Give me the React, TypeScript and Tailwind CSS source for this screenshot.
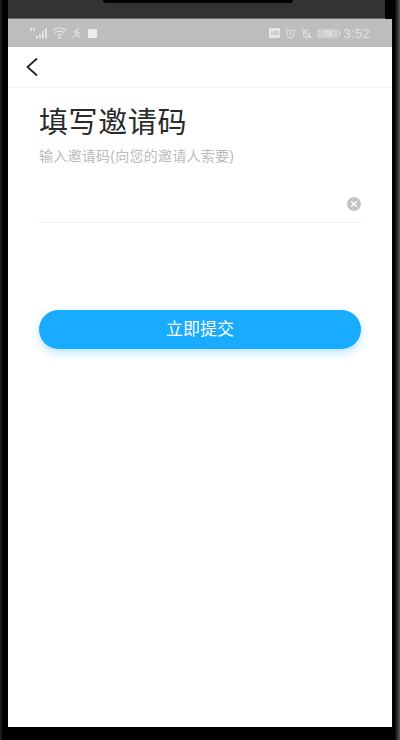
import React from "react";

const font = { fontFamily: '"Liberation Sans", "Noto Sans CJK SC", sans-serif' };

function StatusIcons() {
  return (
    <div className="flex items-center">
      <svg width="18" height="12" viewBox="0 0 18 12" fill="#e2e2e2">
        <rect x="0" y="1" width="2" height="3" />
        <rect x="3" y="1" width="2" height="3" />
        <path d="M6 9h2v2.500H6zM9 7h2v4.500H9zM12 4h2v7.500h-2zM15 1h2v10.500h-2z" />
      </svg>
      <svg width="15" height="12" viewBox="0 0 15 12" fill="none" stroke="#e2e2e2" strokeWidth="1.2" className="ml-[4px]">
        <path d="M0.800 3.500a9.500 9.500 0 0 1 13.400 0" />
        <path d="M3 6a6.300 6.300 0 0 1 9 0" />
        <path d="M5.200 8.300a3.200 3.200 0 0 1 4.600 0" />
        <circle cx="7.500" cy="10.500" r="0.700" fill="#e2e2e2" />
      </svg>
      <svg width="11" height="12" viewBox="0 0 12 12" fill="none" stroke="#dedede" strokeWidth="1.400" className="ml-[4px]">
        <circle cx="7.500" cy="1.800" r="1.100" fill="#dedede" stroke="none" />
        <path d="M3 5 L6 3.800 L5.500 7.500 L2 11" />
        <path d="M6 3.800 L8 6 L10.500 6.500" />
        <path d="M5.500 7.500 L8.500 9 L8.500 11.500" />
      </svg>
      <div className="ml-[6px] h-[9px] w-[9px] rounded-[1px] bg-[#ececec]" />
    </div>
  );
}

function RightStatus() {
  return (
    <div className="flex items-center">
      <div className="flex h-[10px] w-[11px] items-center justify-center rounded-[1px] bg-[#e6e6e6] text-[6px] font-bold leading-none text-[#bdbdbd]">
        HD
      </div>
      <svg width="11" height="11" viewBox="0 0 13 12" fill="none" stroke="#e2e2e2" strokeWidth="1.200" className="ml-[5px]">
        <circle cx="6.500" cy="6.500" r="4.400" />
        <path d="M6.500 4v2.700l1.700 1" />
        <path d="M0.800 2.600 L3 0.800 M12.200 2.600 L10 0.800" />
      </svg>
      <svg width="11" height="11" viewBox="0 0 12 12" fill="none" stroke="#e2e2e2" strokeWidth="1.200" className="ml-[5px]">
        <path d="M3 8.500V5a3 3 0 0 1 4.800-2.400M9 5v3.500l1 1H2.500" />
        <path d="M5 11h2" />
        <path d="M1 1l10 10" />
      </svg>
      <div className="relative ml-[5px] flex h-[9px] w-[21px] items-center justify-center rounded-[1px] bg-[#cfcfcf] text-[7px] font-bold leading-none text-[#e8e8e8]">
        73
        <div className="absolute right-[-2px] h-[5px] w-[1px] bg-[#e6e6e6]" />
      </div>
      <span className="ml-[5px] text-[13px] leading-none tracking-[0.3px] text-[#e2e2e2]">3:52</span>
    </div>
  );
}

export default function App() {
  return (
    <div className="relative flex h-[740px] w-[400px] flex-col overflow-hidden bg-black" style={font}>
      {/* phone frame edges */}
      <div className="absolute inset-y-0 left-0 w-[2px] bg-[#1c1c1c]" />
      <div className="absolute inset-y-0 right-0 w-[5px] bg-gradient-to-r from-[#0a0a0a] to-[#5a5a5a]" />
      <div className="absolute left-[103px] top-0 h-[3px] w-[190px] rounded-b-[5px] bg-black" />

      <div className="ml-[8px] h-[19px] w-[377px] border-b border-[#6f716e] bg-[#323432]" />

      <div className="ml-[8px] flex w-[384px] flex-1 flex-col bg-white">
        <div className="flex h-[28px] items-center justify-between bg-[#bdbdbd] pl-[22px] pr-[22px]">
          <StatusIcons />
          <RightStatus />
        </div>

        <div className="flex h-[41px] items-center border-b border-[#f6f6f6] pl-[17px]">
          <svg width="14" height="20" viewBox="0 0 14 20" fill="none" stroke="#222222" strokeWidth="1.700">
            <path d="M12 1.500 L2.500 10 L12 18.500" />
          </svg>
        </div>

        <div className="flex flex-1 flex-col px-[31px]">
          <h1 className="mt-[19px] text-[29px] font-normal leading-[33px] tracking-[0.6px] text-[#2a2a2a]">填写邀请码</h1>
          <p className="mt-[8px] text-[14px] leading-[16px] tracking-[0.25px] text-[#bababa]">输入邀请码(向您的邀请人索要)</p>

          <div className="mt-[22px] flex h-[37px] items-center justify-end border-b border-[#eeeeee]">
            <div className="flex h-[14px] w-[14px] items-center justify-center rounded-full bg-[#c4c4c4]">
              <svg width="8" height="8" viewBox="0 0 8 8" fill="none" stroke="#ffffff" strokeWidth="1.400">
                <path d="M1.200 1.200 L6.800 6.800 M6.800 1.200 L1.200 6.800" />
              </svg>
            </div>
          </div>

          <button className="mt-[87px] flex h-[39px] w-[322px] items-center justify-center rounded-full bg-[#18abff] text-[17px] text-white shadow-[0_4px_8px_rgba(24,171,255,0.3)]">
            立即提交
          </button>
        </div>
      </div>
      <div className="h-[13px]" />
    </div>
  );
}
